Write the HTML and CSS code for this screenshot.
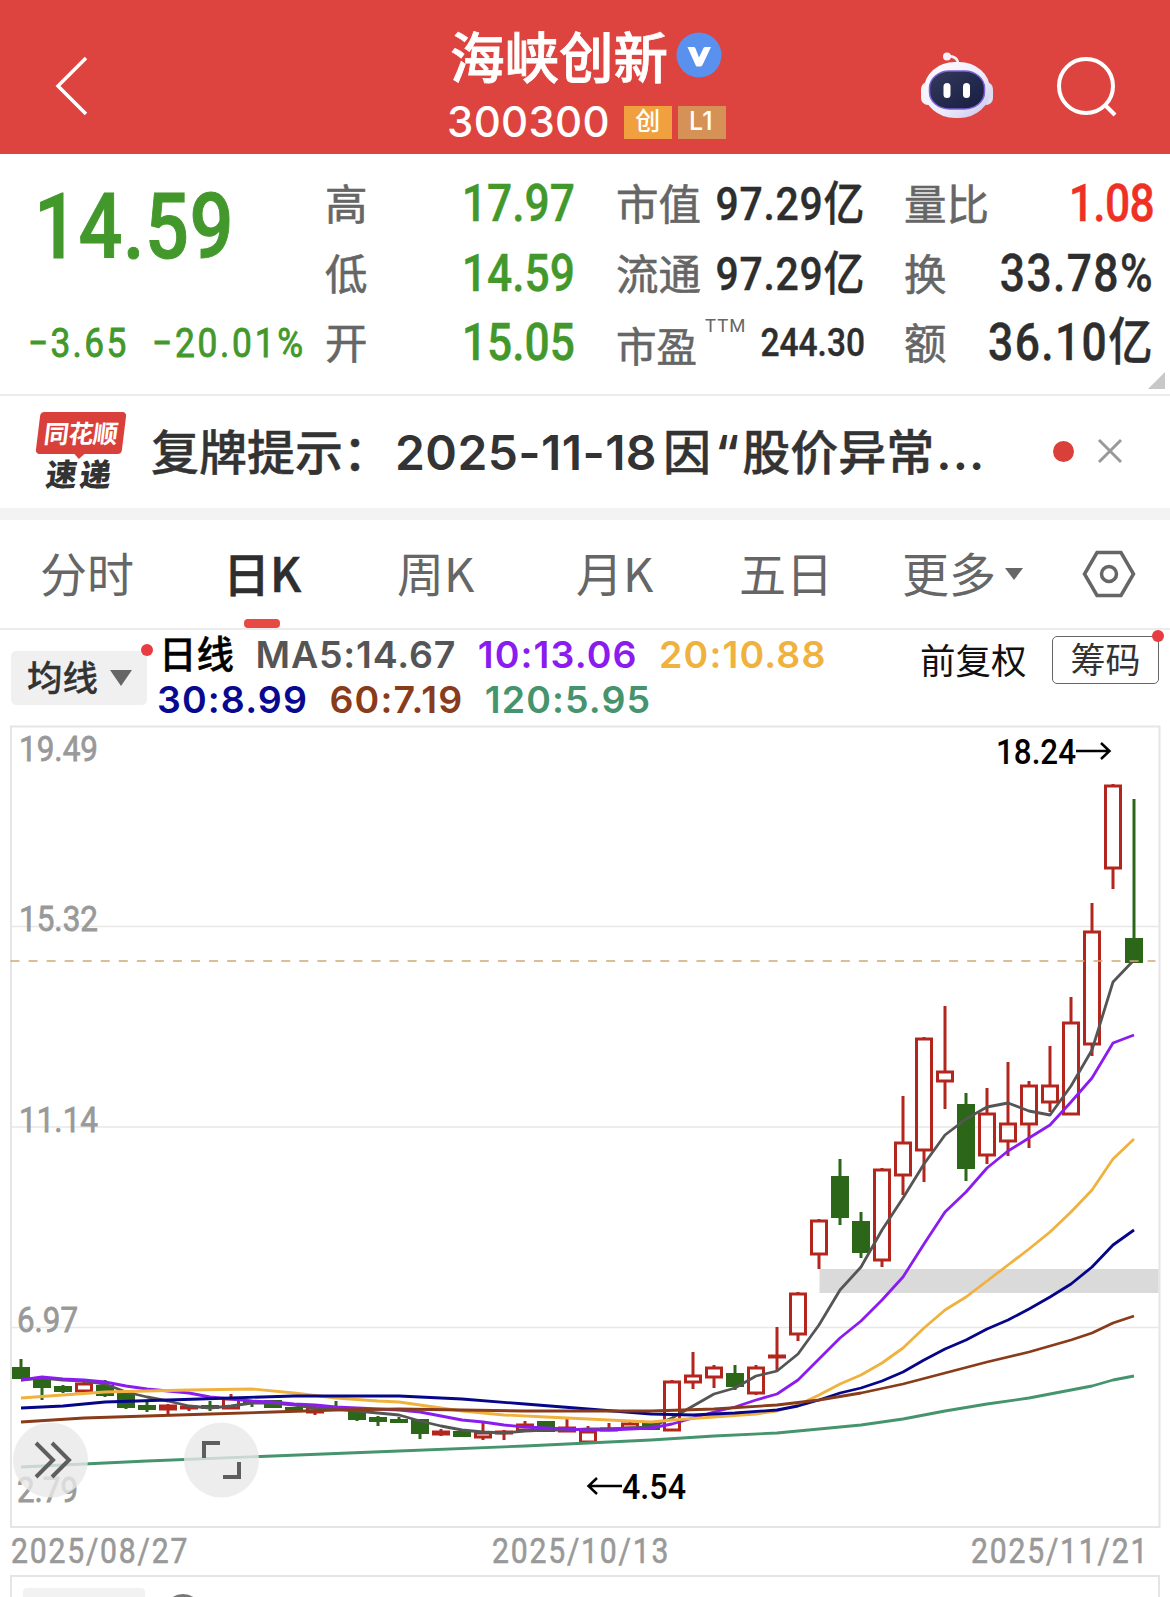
FILE: index.html
```html
<!DOCTYPE html>
<html lang="zh-CN">
<head>
  <meta charset="utf-8">
  <meta name="viewport" content="width=device-width, initial-scale=1.0">
  <title>海峡创新 300300</title>
  <link rel="stylesheet" href="styles.css">
  <script src="chart.js" defer></script>
</head>
<body>
  <header class="header">
    <svg class="back" width="36" height="64" viewBox="0 0 36 64"><path d="M32 4 4 32l28 28"/></svg>
    <div class="stock">
      <div class="name">海峡创新
        <svg width="46" height="46" viewBox="0 0 46 46"><circle cx="23" cy="23" r="22.5" fill="#5a90ee"/><path d="M11.500 15h6.500q1 0 1.500 1.500l3.500 9 4.500-9.500q.700-1 1.500-1H35l-8.500 18q-1 1.500-2.500 1.500h-2.500q-1.500 0-2-1.500z" fill="#fff"/></svg>
      </div>
      <div class="code">300300<span class="tag">创</span><span class="tag l1">L1</span></div>
    </div>
    <svg class="robot" width="74" height="70" viewBox="0 0 74 70">
      <defs>
        <linearGradient id="shell" x1="0" y1="0" x2="1" y2="1"><stop offset="0" stop-color="#fff"/><stop offset=".6" stop-color="#eceafa"/><stop offset="1" stop-color="#c3c5ea"/></linearGradient>
        <linearGradient id="visor" x1="0" y1="0" x2="1" y2="1"><stop offset="0" stop-color="#333a5c"/><stop offset="1" stop-color="#171d40"/></linearGradient>
      </defs>
      <path d="M27 6q11 0 11 8" fill="none" stroke="#f3eef6" stroke-width="2.500"/>
      <circle cx="27" cy="6.500" r="4" fill="#f6f1f8"/>
      <rect x="1" y="32" width="14" height="23" rx="7" fill="#f4f2fb"/>
      <rect x="59" y="32" width="14" height="23" rx="7" fill="#dfdcf3"/>
      <rect x="4" y="12" width="66" height="56" rx="31" ry="27" fill="url(#shell)"/>
      <rect x="9.500" y="21" width="55" height="38" rx="20" ry="17" fill="url(#visor)" stroke="#7e60d8" stroke-width="1.500"/>
      <rect x="23.500" y="33" width="7" height="15" rx="3.500" fill="#fff"/>
      <rect x="43" y="33" width="7" height="15" rx="3.500" fill="#fff"/>
    </svg>
    <svg class="search" width="64" height="64" viewBox="0 0 64 64"><circle cx="31" cy="31" r="27"/><path d="M50 50l10 10"/></svg>
  </header>

  <section class="quote">
    <div class="price">
      <div class="last"><span class="din">14.59</span></div>
      <div class="change"><span class="din">−3.65</span><span class="din">−20.01%</span></div>
    </div>
    <dl class="col green">
      <div><dt>高</dt><dd>17.97</dd></div>
      <div><dt>低</dt><dd>14.59</dd></div>
      <div><dt>开</dt><dd>15.05</dd></div>
    </dl>
    <dl class="col cap">
      <div><dt>市值</dt><dd>97.29亿</dd></div>
      <div><dt>流通</dt><dd>97.29亿</dd></div>
      <div class="pe"><dt>市盈<sup>TTM</sup></dt><dd>244.30</dd></div>
    </dl>
    <dl class="col turnover">
      <div><dt>量比</dt><dd class="red">1.08</dd></div>
      <div><dt>换</dt><dd>33.78%</dd></div>
      <div><dt>额</dt><dd>36.10亿</dd></div>
    </dl>
    <i class="corner"></i>
  </section>

  <section class="news">
    <div class="logo"><b>同花顺</b><em>速递</em></div>
    <p>复牌提示：<span class="day">2025-11-18</span>因<span class="open">“</span>股价异常<span class="more">...</span></p>
    <i class="dot"></i>
    <svg class="close" width="26" height="26" viewBox="0 0 26 26"><path d="M2 2l22 22M24 2 2 24"/></svg>
  </section>

  <nav class="tabs">
    <a>分时</a>
    <a class="on">日K</a>
    <a>周K</a>
    <a>月K</a>
    <a>五日</a>
    <a>更多<svg width="20" height="14" viewBox="0 0 20 14"><path d="M1 1h18l-9 12z"/></svg></a>
    <svg class="hex" width="54" height="48" viewBox="0 0 54 48"><path d="M15 2.500h24L51.500 24 39 45.500H15L2.500 24z"/><circle cx="27" cy="24" r="7.500"/></svg>
  </nav>

  <section class="legend">
    <div class="pick">均线<svg width="22" height="16" viewBox="0 0 22 16"><path d="M0 0h22L11 16z"/></svg></div>
    <div class="ma">
      <div><b>日线</b><span class="ma5">MA5:14.67</span><span class="ma10">10:13.06</span><span class="ma20">20:10.88</span></div>
      <div><span class="ma30">30:8.99</span><span class="ma60">60:7.19</span><span class="ma120">120:5.95</span></div>
    </div>
    <div class="fq">前复权</div>
    <div class="chips">筹码</div>
  </section>

  <svg class="chart" width="1170" height="808" viewBox="0 721 1170 808">
    <path class="grid" d="M11 926.500h1148M11 1127h1148M11 1327.500h1148"/>
    <rect class="frame" x="11" y="726.500" width="1148.500" height="800.500"/>
    <rect class="gap" x="819.500" y="1269" width="339" height="24"/>
    <g class="scale">
      <text x="19" y="761" textLength="79">19.49</text>
      <text x="19" y="931" textLength="79">15.32</text>
      <text x="19" y="1132" textLength="79">11.14</text>
      <text x="17" y="1332" textLength="61">6.97</text>
      <text x="17" y="1502" textLength="61">2.79</text>
    </g>
    <g id="candles"></g>
    <g id="lines"></g>
    <path class="now" d="M10.500 961h1145"/>
    <g class="mark">
      <text x="996" y="764" textLength="80">18.24</text>
      <path d="M1076 751h33M1101 743l8.500 8-8.500 8"/>
      <text x="622" y="1499" textLength="64">4.54</text>
      <path d="M622 1486h-33M597 1478l-8.500 8 8.500 8"/>
    </g>
    <g class="tool">
      <circle cx="50.500" cy="1460" r="37.500"/>
      <path d="M36 1443l17 17-17 17M52 1443l17 17-17 17"/>
      <circle cx="221.500" cy="1460" r="37.500"/>
      <path d="M204 1458v-15h16M239 1462v15h-16"/>
    </g>
  </svg>

  <div class="dates">
    <span class="din">2025/08/27</span>
    <span class="din">2025/10/13</span>
    <span class="din">2025/11/21</span>
  </div>
  <section class="volume"><i class="vol-pick"></i><i class="ring"></i></section>
</body>
</html>
```

FILE: styles.css
```css
* {
  margin: 0; padding: 0;
  box-sizing: border-box; }
body {
  width: 1170px; height: 1597px;
  overflow: hidden;
  background: #fff;
  color: #333;
  font-family: Inter, 'Noto Sans CJK SC', sans-serif; }
i, em { font-style: normal; }
svg { flex: none; }

/* narrow digits */
.din, dd {
  font-family: Roboto, 'Noto Sans CJK SC', sans-serif;
  font-weight: 500;
  white-space: nowrap; }
.din {
  display: inline-block;
  transform: scaleX(.86);
  transform-origin: 0 50%; }

/* header */
.header {
  height: 154px;
  display: grid;
  grid-template-columns: 440px 300px 180px 135px auto;
  background: #dd443f;
  color: #fff; }
.back, .search {
  fill: none;
  stroke: #fff;
  stroke-width: 4; }
.back { margin: 54px 0 0 54px; stroke-width: 3.5; }
.name {
  display: flex;
  align-items: center;
  gap: 8px;
  height: 80px;
  margin-top: 14px;
  padding-left: 10px;
  line-height: 73px;
  font-family: 'Noto Sans CJK SC', sans-serif;
  font-size: 54.5px;
  font-weight: 500;
  -webkit-text-stroke: .8px; }
.name svg { margin-top: 1px; }
.code {
  display: flex;
  align-items: center;
  margin-top: 6px;
  padding-left: 7px;
  line-height: 44px;
  font-size: 42px;
  letter-spacing: .3px;
  font-weight: 550; }
.tag {
  width: 48px; height: 33px;
  margin-left: auto;
  background: #f0a03f;
  line-height: 31px;
  text-align: center;
  font-size: 25px; }
.tag.l1 { margin: 0 14px 0 6px; padding-right: 2px; background: #d69156; }
.robot { grid-column: 4; margin-top: 50px; }
.search { margin-top: 55px; }

/* quote */
.quote {
  position: relative;
  height: 242px;
  display: grid;
  grid-template-columns: 325px 250px 41px 249px 39px 250px;
  border-bottom: 2px solid #ececec; }
.last {
  height: 144px;
  padding-left: 34px;
  line-height: 144px;
  font-size: 90px;
  letter-spacing: .6px;
  color: #43982c;
  -webkit-text-stroke: 1px; }
.change {
  display: flex;
  padding: 15px 0 0 28px;
  line-height: 60px;
  font-size: 41px;
  letter-spacing: 2.7px;
  color: #43982c; }
.change .din { width: 124px; font-weight: 400; -webkit-text-stroke: .9px; }
.change .din + .din { letter-spacing: 3.2px; }
.col { grid-column: 2; padding-top: 15px; }
.col.cap { grid-column: 4; }
.col.turnover { grid-column: 6; }
.col div {
  height: 69.500px;
  display: flex;
  justify-content: space-between;
  line-height: 69.500px; }
.col dt {
  line-height: 66px;
  font-family: 'Noto Sans CJK SC', sans-serif;
  font-size: 42.5px;
  color: #666;
  white-space: nowrap;
  -webkit-text-stroke: .6px; }
.col dd {
  width: 0;
  display: flex;
  justify-content: flex-end;
  transform: scaleX(.87);
  transform-origin: 100% 50%;
  font-size: 51px;
  color: #2e2e2e;
  -webkit-text-stroke: .4px; }
.green dd { color: #43982c; }
.turnover dd { letter-spacing: 1.6px; }
.turnover .red { color: #ee3124; letter-spacing: -.8px; }
.cap dd { font-size: 47px; letter-spacing: .8px; }
.col .pe dt { font-size: 40.5px; line-height: 73px; }
.col .pe dd { font-size: 38.5px; letter-spacing: 0; }
.pe sup {
  margin-left: 8px;
  vertical-align: 30px;
  line-height: 0;
  font-family: Roboto, sans-serif;
  font-size: 18.5px;
  letter-spacing: 1px;
  -webkit-text-stroke: 0; }
.corner {
  position: absolute;
  right: 5px; bottom: 5px;
  border-style: solid;
  border-width: 0 0 17px 17px;
  border-color: transparent transparent #c8c8c8; }

/* news */
.news {
  height: 124px;
  display: flex;
  align-items: center;
  padding: 0 47px 2px 35px;
  border-bottom: 12px solid #f3f3f3; }
.logo {
  width: 92px;
  text-align: center;
  font-family: 'Noto Sans CJK SC', sans-serif; }
.logo b {
  position: relative;
  display: block;
  height: 42px;
  margin: 0 3px;
  border-radius: 4px;
  transform: skewX(-7deg);
  background: #d9403a;
  color: #fff;
  line-height: 41px;
  letter-spacing: -.5px;
  font-size: 25px; }
.logo b::after {
  content: "";
  position: absolute;
  left: 38px; top: 41px;
  border: 6px solid transparent;
  border-top-color: #d9403a; }
.logo em {
  display: block;
  transform: skewX(-7deg);
  margin-left: -1px;
  line-height: 37px;
  letter-spacing: 3px;
  font-size: 31px;
  font-weight: 900; }
.news p {
  width: 880px;
  margin-left: 24px;
  font-family: 'Noto Sans CJK SC', sans-serif;
  font-size: 48px;
  font-weight: 500;
  line-height: 59px;
  white-space: nowrap;
  -webkit-text-stroke: .4px; }
.news p span {
  font-family: Inter, sans-serif;
  font-weight: 560;
  -webkit-text-stroke: 0; }
.news .day { margin: 0 6px 0 4px; letter-spacing: .4px; }
.news .open { margin: 0 3px 0 4px; }
.news .more { margin-left: 2px; letter-spacing: 1px; }
.dot {
  width: 21px; height: 21px;
  margin-left: auto;
  border-radius: 50%;
  background: #d9403a; }
.close {
  margin-left: 23px;
  fill: none;
  stroke: #999;
  stroke-width: 3; }

/* tabs */
.tabs {
  height: 110px;
  display: grid;
  grid-template-columns: 183px 174px 179px 163px 163px 183px auto;
  padding-left: 40px;
  border-bottom: 2px solid #ececec;
  line-height: 104px;
  font-family: 'Noto Sans CJK SC', sans-serif;
  font-size: 47px;
  color: #666;
  white-space: nowrap; }
.tabs .on {
  position: relative;
  color: #2e2e2e;
  font-weight: 500;
  -webkit-text-stroke: .6px; }
.on::after {
  content: "";
  position: absolute;
  left: 21px; bottom: 0;
  width: 36px; height: 9px;
  border-radius: 4px;
  background: #e74a42; }
.tabs a svg { margin-left: 8px; vertical-align: 11px; fill: #666; }
.hex {
  margin: 30px 0 0 -3px;
  fill: none;
  stroke: #666;
  stroke-width: 3.5; }

/* legend */
.legend {
  height: 91px;
  display: flex;
  padding: 0 11px; }
.pick, .chips { position: relative; }
.pick::after, .chips::after {
  content: "";
  position: absolute;
  right: -6px; top: -7px;
  width: 12px; height: 12px;
  border-radius: 50%;
  background: #e93c42; }
.pick {
  width: 136px; height: 54px;
  margin-top: 21px;
  padding-left: 16px;
  border-radius: 5px;
  background: #f0f0f0;
  line-height: 55px;
  font-size: 35.5px;
  font-weight: 500;
  -webkit-text-stroke: .3px; }
.pick svg { margin-left: 12px; vertical-align: 5px; fill: #666; }
.ma {
  width: 771px;
  padding: 2px 0 0 10px;
  line-height: 45px;
  font-size: 37.5px;
  letter-spacing: 1.1px;
  font-weight: 600; }
.ma div { display: flex; height: 45px; gap: 21.500px; }
.ma b {
  margin-left: 2px;
  color: #000;
  letter-spacing: 0;
  font-weight: 500;
  -webkit-text-stroke: .4px; }
.ma b + span { letter-spacing: .8px; }
.ma5 { color: #555; }
.ma10 { color: #8a1cf0; }
.ma20 { color: #f0b23f; }
.ma30 { color: #080890; }
.ma60 { color: #893c1b; }
.ma120 { color: #45946d; }
.fq {
  margin: 3px 0 0 2px;
  line-height: 58px;
  font-size: 35.5px;
  color: #111; }
.chips {
  width: 107px; height: 48px;
  margin: 6px 0 0 auto;
  border: 1.5px solid #666;
  border-radius: 5px;
  line-height: 46px;
  text-align: center;
  font-size: 35px; }

/* chart */
.chart { display: block; }
.chart path, .chart polyline { fill: none; }
.grid { stroke: #e8e8e8; stroke-width: 1.5; }
.frame { fill: none; stroke: #e5e5e5; stroke-width: 2; }
.gap { fill: #dadada; }
.now { stroke: #d0a877; stroke-width: 1.5; stroke-dasharray: 9 9.05; }
.chart text { font-family: Roboto, sans-serif; font-size: 35px; }
.scale text { fill: #999; stroke: #999; stroke-width: .8px; }
.mark text { font-weight: 500; }
.mark path { stroke: #000; stroke-width: 2.5; }
.tool circle { fill: #e8e8e8; fill-opacity: .8; }
.tool path { stroke: #5e5e5e; stroke-width: 4; }
.up { fill: none; stroke: #b3261e; stroke-width: 3; }
.wick-up { stroke: #b3261e; stroke-width: 3; }
.down { fill: #2b6619; }
.wick-down { stroke: #2b6619; stroke-width: 3; }

.dates {
  display: flex;
  justify-content: space-between;
  height: 46px;
  padding: 0 0 0 11px;
  line-height: 45px;
  font-size: 35px;
  color: #999; }
.dates .din {
  width: 199px;
  font-weight: 400;
  letter-spacing: 2.1px;
  -webkit-text-stroke: .6px; }
.dates .din:nth-child(2) { margin-right: -1px; }
.volume {
  display: flex;
  height: 40px;
  margin: 0 10px;
  padding: 11px 0 0 11px;
  border: 2px solid #e5e5e5; }
.vol-pick { width: 122px; height: 30px; border-radius: 4px; background: #f2f2f2; }
.ring {
  width: 38px; height: 38px;
  margin: 6px 0 0 19px;
  border: 3px solid #777;
  border-radius: 50%; }
```

FILE: chart.js
```js
// one candle per day: [direction, high, body top, body bottom, low]
const candles = [
  ["d",1359,1367,1379,1379], ["d",1377,1377,1388,1400], ["d",1385,1386,1392,1393],
  ["u",1382,1382,1392,1392], ["d",1380,1385,1396,1397], ["d",1393,1393,1408,1409],
  ["d",1402,1405,1410,1412], ["u",1404,1404,1410,1414], ["u",1405,1405,1409,1411],
  ["d",1401,1405,1409,1411], ["u",1394,1397,1409,1409], ["d",1401,1401,1404,1407],
  ["d",1400,1400,1408,1408], ["d",1407,1407,1411,1411], ["u",1406,1406,1413,1415],
  ["d",1401,1407,1410,1410], ["d",1410,1410,1420,1421], ["d",1416,1417,1422,1426],
  ["d",1417,1419,1423,1423], ["d",1419,1419,1434,1439], ["u",1429,1430,1435,1436],
  ["d",1430,1431,1437,1437], ["u",1423,1431,1438,1440], ["u",1430,1430,1434,1440],
  ["u",1421,1423,1431,1431], ["d",1421,1421,1432,1432], ["u",1419,1426,1432,1432],
  ["u",1426,1430,1443,1443], ["u",1423,1427,1430,1430], ["u",1421,1422,1429,1429],
  ["d",1422,1423,1430,1430], ["u",1380,1380,1431,1431], ["u",1352,1374,1383,1389],
  ["u",1365,1366,1378,1388], ["d",1365,1373,1387,1390], ["u",1365,1366,1394,1395],
  ["u",1327,1354,1358,1370], ["u",1292,1292,1335,1341], ["u",1219,1219,1255,1269],
  ["d",1159,1176,1218,1225], ["d",1212,1221,1253,1258], ["u",1168,1168,1261,1267],
  ["u",1096,1141,1176,1195], ["u",1037,1037,1151,1182], ["u",1006,1070,1082,1109],
  ["d",1093,1104,1169,1181], ["u",1088,1112,1156,1164], ["u",1062,1122,1142,1156],
  ["u",1081,1084,1125,1148], ["u",1046,1084,1103,1112], ["u",997,1021,1115,1115],
  ["u",903,930,1045,1056], ["u",784,784,869,889], ["d",799,938,963,963] ];

// moving averages
const lines = {
  "#555555": "21,1380 42,1378 63,1380 84,1381 105,1384 126,1392 147,1397 168,1401 189,1406 210,1408 231,1406 252,1403 273,1403 294,1405 315,1408 336,1409 357,1411 378,1413 399,1415 420,1421 441,1426 462,1430 483,1432 504,1433 525,1431 546,1430 567,1430 588,1429 609,1429 630,1428 651,1427 672,1418 693,1406 714,1394 735,1388 756,1376 777,1371 798,1354 819,1325 840,1290 861,1267 882,1230 903,1198 924,1164 945,1135 966,1119 987,1107 1008,1103 1029,1111 1050,1115 1071,1086 1092,1050 1113,982 1134,960",
  "#8a1cf0": "21,1380 42,1377 63,1379 84,1380 105,1382 126,1386 147,1389 168,1391 189,1393 210,1397 231,1399 252,1401 273,1402 294,1404 315,1405 336,1407 357,1408 378,1409 399,1410 420,1412 441,1416 462,1420 483,1422 504,1425 525,1427 546,1428 567,1429 588,1430 609,1430 630,1429 651,1428 672,1424 693,1418 714,1412 735,1407 756,1400 777,1394 798,1380 819,1359 840,1338 861,1321 882,1300 903,1277 924,1244 945,1212 966,1192 987,1168 1008,1151 1029,1138 1050,1125 1071,1102 1092,1078 1113,1043 1134,1035",
  "#f0b23f": "21,1398 63,1395 105,1392 147,1391 189,1390 252,1389 294,1393 336,1398 378,1401 399,1402 420,1405 462,1411 504,1415 546,1417 588,1419 630,1421 651,1422 672,1420 714,1417 756,1414 777,1411 798,1405 819,1395 840,1384 861,1375 882,1363 903,1348 924,1328 945,1310 966,1297 987,1281 1008,1265 1029,1249 1050,1232 1071,1212 1092,1190 1113,1159 1134,1139",
  "#060688": "21,1408 63,1406 105,1402 168,1400 231,1398 294,1396 336,1396 399,1396 462,1399 525,1404 588,1409 651,1414 693,1415 735,1413 777,1410 798,1406 819,1400 840,1393 861,1388 882,1381 903,1372 924,1360 945,1349 966,1340 987,1329 1008,1320 1029,1309 1050,1297 1071,1284 1092,1267 1113,1245 1134,1230",
  "#883c1b": "21,1422 84,1418 147,1416 210,1414 273,1412 336,1410 399,1409 525,1411 651,1411 714,1409 777,1405 819,1400 861,1393 903,1384 945,1373 987,1362 1029,1352 1071,1340 1092,1333 1113,1323 1134,1316",
  "#45946d": "21,1467 147,1461 273,1456 399,1451 525,1446 588,1443 651,1440 714,1436 777,1433 861,1425 903,1419 945,1411 987,1404 1029,1398 1071,1390 1092,1386 1113,1380 1134,1376" };

let out = "";
candles.forEach(([dir, high, top, bottom, low], i) => {
  const x = 21 + 21 * i;
  const wick = dir === "u" ? "wick-up" : "wick-down";
  out += `<path class="${wick}" d="M${x} ${high}V${top + 1}M${x} ${bottom}V${low}"/>`;
  out += dir === "u"
    ? `<rect class="up" x="${x - 7.5}" y="${top + 2}" width="15" height="${Math.max(bottom - top - 3, 1)}"/>`
    : `<rect class="down" x="${x - 9}" y="${top}" width="18" height="${bottom - top}"/>`; });
document.getElementById("candles").innerHTML = out;

document.getElementById("lines").innerHTML = Object.entries(lines).map(([color, points]) =>
  `<polyline points="${points}" stroke="${color}" stroke-width="2.8" stroke-linejoin="round"/>`).join("");

// squeeze the digits, not only the gaps between them
document.querySelectorAll("text").forEach((t) => {
  t.setAttribute("lengthAdjust", "spacingAndGlyphs"); });
```
